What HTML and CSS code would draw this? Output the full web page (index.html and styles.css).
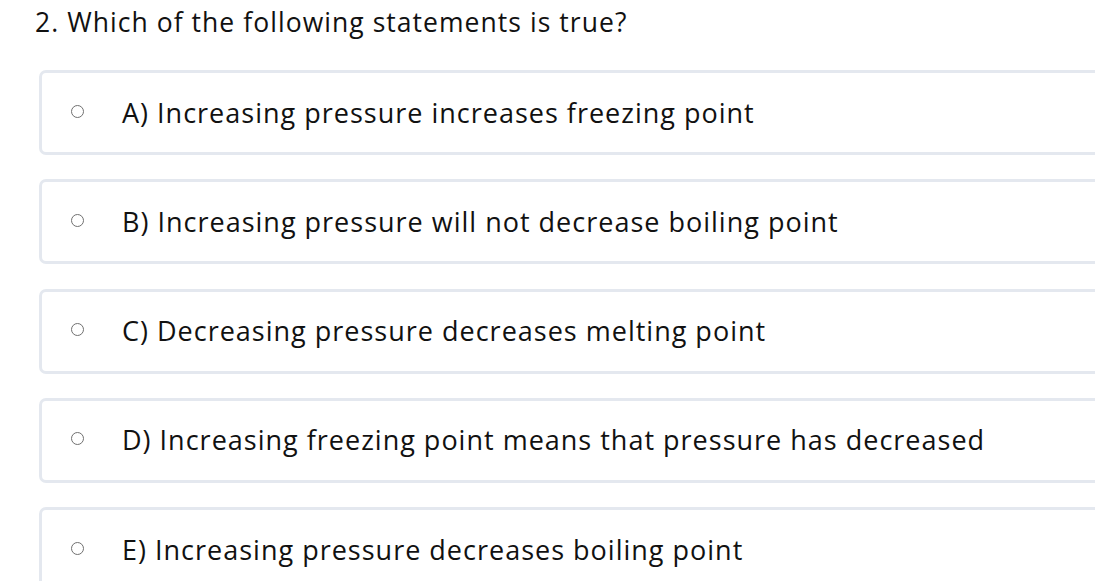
FILE: index.html
```html
<!DOCTYPE html>
<html>
<head>
<meta charset="utf-8">
<link rel="stylesheet" href="styles.css">
</head>
<body>
<div class="quiz">
  <h2 class="question">2. Which of the following statements is true?</h2>
  <div class="options">
    <label class="option"><span class="radio"></span><span class="text">A) Increasing pressure increases freezing point</span></label>
    <label class="option"><span class="radio"></span><span class="text">B) Increasing pressure will not decrease boiling point</span></label>
    <label class="option"><span class="radio"></span><span class="text">C) Decreasing pressure decreases melting point</span></label>
    <label class="option"><span class="radio"></span><span class="text">D) Increasing freezing point means that pressure has decreased</span></label>
    <label class="option"><span class="radio"></span><span class="text">E) Increasing pressure decreases boiling point</span></label>
  </div>
</div>
</body>
</html>
```
FILE: styles.css
```css
html, body {
  margin: 0;
  padding: 0;
  background: #ffffff;
  overflow: hidden;
}
.quiz {
  padding: 4px 0 0 35px;
  font-family: "Open Sans", sans-serif;
  color: #111111;
}
.question {
  margin: 0;
  font-size: 26.5px;
  font-weight: 400;
  letter-spacing: 1.05px;
  line-height: 36px;
}
.options {
  display: flex;
  flex-direction: column;
  gap: 24.3px;
  margin-top: 30px;
  margin-left: 4px;
}
.option {
  display: flex;
  align-items: center;
  width: 1100px;
  height: 79px;
  box-sizing: content-box;
  border: 3px solid #e4e8ef;
  border-radius: 7px;
}
.radio {
  width: 11px;
  height: 11px;
  border: 1.5px solid #707070;
  border-radius: 50%;
  margin-left: 29px;
  margin-bottom: 3px;
  flex: none;
}
.text {
  margin-left: 38px;
  font-size: 27px;
  letter-spacing: 1px;
  line-height: 36px;
}
```
